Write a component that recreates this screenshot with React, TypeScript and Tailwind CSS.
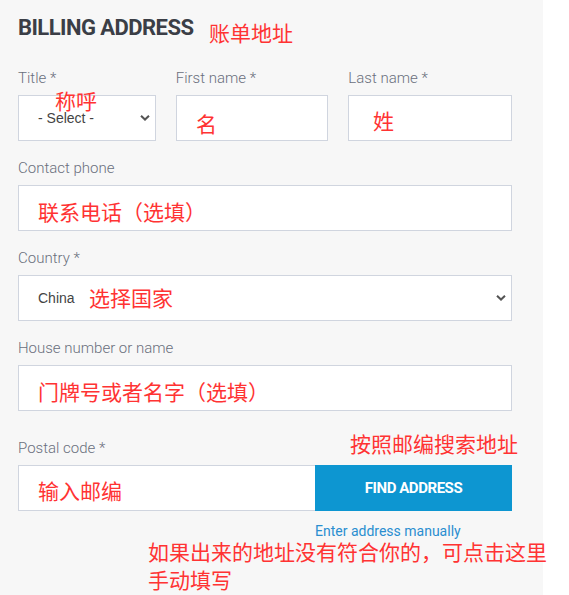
import React from "react";

const labelCls =
  "block text-[15px] leading-[22px] font-light text-[#6a6f7d] mb-[6px]";
const boxCls = "h-[46px] bg-white border border-[#d0d5df] outline-none";

const Chevron = () => (
  <svg
    width="10"
    height="7"
    viewBox="0 0 10 7"
    className="absolute right-[6px] top-1/2 -translate-y-1/2 pointer-events-none"
  >
    <path d="M1 1.2 L5 5 L9 1.2" fill="none" stroke="#555" strokeWidth="2" />
  </svg>
);

// red annotation notes laid over the form
const notes: { text: string; cls: string }[] = [
  { text: "账单地址", cls: "left-[209px] top-[22px]" },
  { text: "称呼", cls: "left-[55px] top-[90px]" },
  { text: "名", cls: "left-[196px] top-[113px]" },
  { text: "姓", cls: "left-[373px] top-[110px]" },
  { text: "联系电话（选填）", cls: "left-[38px] top-[201px]" },
  { text: "选择国家", cls: "left-[89px] top-[287px]" },
  { text: "门牌号或者名字（选填）", cls: "left-[38px] top-[381px]" },
  { text: "按照邮编搜索地址", cls: "left-[350px] top-[433px]" },
  { text: "输入邮编", cls: "left-[38px] top-[480px]" },
  { text: "如果出来的地址没有符合你的，可点击这里", cls: "left-[148px] top-[541px]" },
  { text: "手动填写", cls: "left-[148px] top-[569px]" },
];

export default function App() {
  return (
    <div className="min-h-[595px] bg-white font-['Roboto',sans-serif]">
      <div className="relative w-[543px] min-h-[595px] bg-[#f7f7f7] pl-[18px] pr-[31px] pt-[16px]">
        <h2 className="text-[22px] leading-[24px] font-bold text-[#3b3e46] tracking-[-0.025em]">
          BILLING ADDRESS
        </h2>

        {/* Title / names */}
        <div className="flex gap-[20px] mt-[27px]">
          <div className="w-[138px]">
            <label className={labelCls}>Title *</label>
            <div className="relative">
              <select
                className={`${boxCls} w-full appearance-none pl-[19px] text-[14px] text-[#444] font-['Liberation_Sans',sans-serif]`}
              >
                <option>- Select -</option>
              </select>
              <Chevron />
            </div>
          </div>
          <div className="w-[153px]">
            <label className={labelCls}>First name *</label>
            <input className={`${boxCls} w-full`} />
          </div>
          <div className="w-[164px]">
            <label className={labelCls}>Last name *</label>
            <input className={`${boxCls} w-full`} />
          </div>
        </div>

        <div className="mt-[16px]">
          <label className={labelCls}>Contact phone</label>
          <input className={`${boxCls} w-full`} />
        </div>

        <div className="mt-[16px]">
          <label className={labelCls}>Country *</label>
          <div className="relative">
            <select
              className={`${boxCls} w-full appearance-none pl-[19px] text-[14px] text-[#444] font-['Liberation_Sans',sans-serif]`}
            >
              <option>China</option>
            </select>
            <Chevron />
          </div>
        </div>

        <div className="mt-[16px]">
          <label className={labelCls}>House number or name</label>
          <input className={`${boxCls} w-full`} />
        </div>

        <div className="mt-[26px]">
          <label className={labelCls}>Postal code *</label>
          <div className="flex">
            <input className={`${boxCls} w-[297px] shrink-0 border-r-0`} />
            <button
              type="button"
              className="h-[46px] flex-1 bg-[#0d96d1] text-white text-[15px] font-bold tracking-[-0.03em]"
            >
              FIND ADDRESS
            </button>
          </div>
          <div className="pl-[297px] mt-[10px] text-[14px] leading-[20px]">
            <a className="text-[#2a8ed0] cursor-pointer">
              Enter address manually
            </a>
          </div>
        </div>

        {notes.map((n) => (
          <span
            key={n.text}
            className={`absolute ${n.cls} text-[21px] leading-[21px] text-[#ff3333] whitespace-nowrap font-['Noto_Sans_CJK_SC',sans-serif] pointer-events-none`}
          >
            {n.text}
          </span>
        ))}
      </div>
    </div>
  );
}
